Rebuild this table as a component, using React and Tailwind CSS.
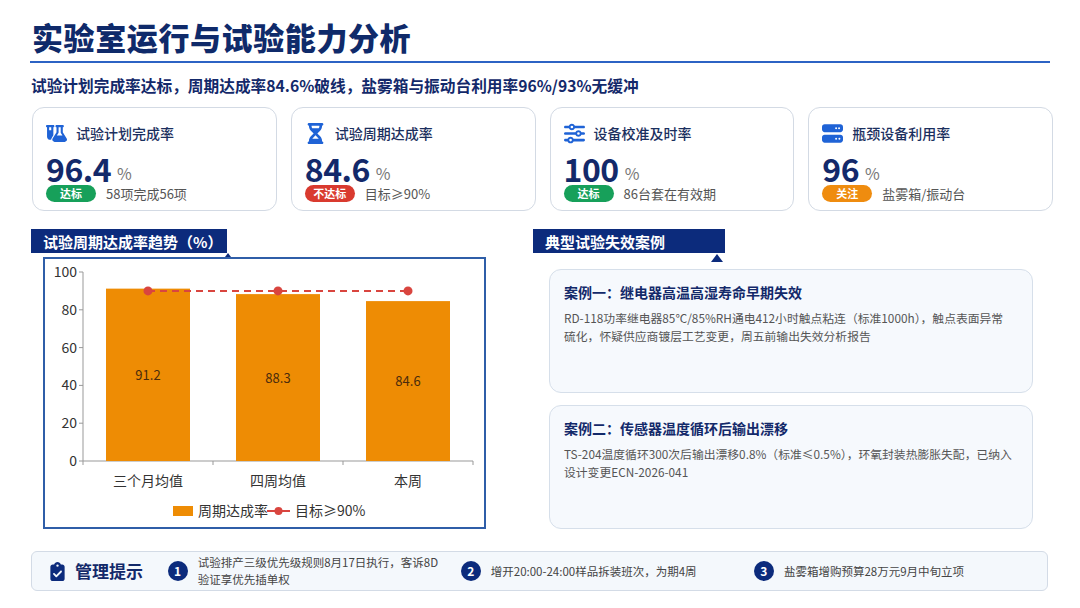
import { FaFlaskVial, FaHourglassHalf, FaSliders, FaServer, FaClipboardCheck } from 'react-icons/fa6';

const FONT = { fontFamily: '"Noto Sans CJK SC", "Noto Sans", sans-serif' };

const kpis = [
  { icon: FaFlaskVial, title: '试验计划完成率', value: '96.4', badge: '达标', tone: 'bg-[#17a05a]', note: '58项完成56项' },
  { icon: FaHourglassHalf, title: '试验周期达成率', value: '84.6', badge: '不达标', tone: 'bg-[#d93a2f]', note: '目标≥90%' },
  { icon: FaSliders, title: '设备校准及时率', value: '100', badge: '达标', tone: 'bg-[#17a05a]', note: '86台套在有效期' },
  { icon: FaServer, title: '瓶颈设备利用率', value: '96', badge: '关注', tone: 'bg-[#ef8c0f]', note: '盐雾箱/振动台' },
];

const bars = [
  { label: '三个月均值', value: 91.2 },
  { label: '四周均值', value: 88.3 },
  { label: '本周', value: 84.6 },
];

// lines broken where the slide breaks them
const cases = [
  {
    title: '案例一：继电器高温高湿寿命早期失效',
    lines: ['RD-118功率继电器85℃/85%RH通电412小时触点粘连（标准1000h），触点表面异常', '硫化，怀疑供应商镀层工艺变更，周五前输出失效分析报告'],
  },
  {
    title: '案例二：传感器温度循环后输出漂移',
    lines: ['TS-204温度循环300次后输出漂移0.8%（标准≤0.5%），环氧封装热膨胀失配，已纳入', '设计变更ECN-2026-041'],
  },
];

const tips = [
  '试验排产三级优先级规则8月17日执行，客诉8D验证享优先插单权',
  '增开20:00-24:00样品拆装班次，为期4周',
  '盐雾箱增购预算28万元9月中旬立项',
];

function KpiCard({ k }) {
  const Icon = k.icon;
  return (
    <div className="h-[104px] rounded-[12px] border border-[#d3dae4] bg-white pl-[13px] pt-[13px]">
      <div className="flex items-center gap-[9px] h-[24px]">
        <Icon className="text-[#1f63d6] text-[21px]" />
        <span className="text-[14px] text-[#1b2f5e] font-medium">{k.title}</span>
      </div>
      <div className="flex items-end mt-[8px] h-[28px]">
        <span className="text-[32px] leading-[26px] font-bold text-[#13296a] tracking-[-0.5px]">{k.value}</span>
        <span className="ml-[6px] text-[16px] leading-none text-[#777]">%</span>
      </div>
      <div className="flex items-center mt-[4px] gap-[10px]">
        <span className={`${k.tone} text-white text-[11px] leading-none font-bold rounded-full w-[50px] h-[17px] flex items-center justify-center`}>{k.badge}</span>
        <span className="text-[13px] leading-[17px] text-[#555]">{k.note}</span>
      </div>
    </div>
  );
}

function Chart() {
  const top = 13;
  const bottom = 202;
  const left = 38;
  const cw = 130;
  const sy = (v) => bottom - (v / 100) * (bottom - top);
  const targetY = sy(90);
  return (
    <svg width="439" height="268" className="block">
      {[0, 20, 40, 60, 80, 100].map((t) => (
        <g key={t}>
          <line x1={left - 4} x2={left} y1={sy(t)} y2={sy(t)} stroke="#999" />
          <text x={left - 6} y={sy(t) + 5} textAnchor="end" fontSize="14" fill="#333">{t}</text>
        </g>
      ))}
      <line x1={left} x2={left} y1={top} y2={bottom} stroke="#999" />
      <line x1={left} x2={left + cw * 3} y1={bottom} y2={bottom} stroke="#999" />
      {[0, 1, 2, 3].map((i) => (
        <line key={i} x1={left + cw * i} x2={left + cw * i} y1={bottom} y2={bottom + 4} stroke="#999" />
      ))}
      {bars.map((b, i) => {
        const cx = left + cw * i + cw / 2;
        const y = sy(b.value);
        return (
          <g key={b.label}>
            <rect x={cx - 42} y={y} width="84" height={bottom - y} fill="#ee8c04" />
            <text x={cx} y={(y + bottom) / 2 + 5} textAnchor="middle" fontSize="13" fill="#4a2b0c">{b.value}</text>
            <text x={cx} y="227" textAnchor="middle" fontSize="14" fill="#333">{b.label}</text>
          </g>
        );
      })}
      <line x1={left + cw / 2} x2={left + cw * 2.5} y1={targetY} y2={targetY} stroke="#d9453f" strokeWidth="2" strokeDasharray="7 5" />
      {[0, 1, 2].map((i) => (
        <circle key={i} cx={left + cw * i + cw / 2} cy={targetY} r="4.5" fill="#d9453f" />
      ))}
      <rect x="128" y="247" width="20" height="10" fill="#ee8c04" />
      <text x="153" y="257" fontSize="14" fill="#333">周期达成率</text>
      <line x1="222" x2="245" y1="252" y2="252" stroke="#d9453f" strokeWidth="2" />
      <circle cx="233.5" cy="252" r="4" fill="#d9453f" />
      <text x="250" y="257" fontSize="14" fill="#333">目标≥90%</text>
    </svg>
  );
}

export default function App() {
  return (
    <div className="w-[1080px] h-[608px] bg-white overflow-hidden" style={FONT}>
      <div className="ml-[30px] w-[1020px] pt-[17px]">
        <h1 className="text-[31px] leading-[40px] font-extrabold text-[#0f2a6a] ml-[2px] tracking-[0.6px]">实验室运行与试验能力分析</h1>
        <div className="mt-[4px] h-[2px] bg-[#2c63c4]" />
        <p className="mt-[13px] ml-[1px] text-[15.7px] leading-[20px] font-bold text-[#13296a]">试验计划完成率达标，周期达成率84.6%破线，盐雾箱与振动台利用率96%/93%无缓冲</p>
      </div>

      <div className="ml-[32px] w-[1021px] mt-[11px] grid grid-cols-4 gap-[14px]">
        {kpis.map((k) => <KpiCard key={k.title} k={k} />)}
      </div>

      <div className="flex mt-[18px] h-[300px]">
        <div className="ml-[31px] w-[455px] flex flex-col">
          <div className="relative w-[196px] h-[24px] bg-[#0c2b7c] flex items-center pl-[12px]">
            <span className="text-white text-[15px] font-bold leading-none">试验周期达成率趋势（%）</span>
            <span className="absolute right-[-4px] bottom-[-4px] w-0 h-0 border-x-[3px] border-x-transparent border-b-[4px] border-b-[#0c2b7c]" />
          </div>
          <div className="ml-[12px] mt-[4px] w-[443px] h-[272px] border-2 border-[#2f5ea8]">
            <Chart />
          </div>
        </div>

        <div className="ml-[47px] flex flex-col">
          <div className="relative w-[192px] h-[24px] bg-[#0c2b7c] flex items-center pl-[12px]">
            <span className="text-white text-[15px] font-bold leading-none">典型试验失效案例</span>
            <span className="absolute right-[2px] bottom-[-9px] w-0 h-0 border-x-[6px] border-x-transparent border-b-[8px] border-b-[#0c2b7c]" />
          </div>
          <div className="ml-[16px] mt-[16px] w-[484px] flex flex-col gap-[12px]">
            {cases.map((c) => (
              <div key={c.title} className="h-[124px] rounded-[12px] border border-[#d6dfea] bg-[#f6f9fd] px-[14px] pt-[12px]">
                <div className="text-[14px] leading-[20px] font-bold text-[#13296a]">{c.title}</div>
                <div className="mt-[7px] text-[11.8px] leading-[18px] text-[#555]">
                  {c.lines.map((l) => <span key={l} className="block whitespace-nowrap">{l}</span>)}
                </div>
              </div>
            ))}
          </div>
        </div>
      </div>

      <div className="ml-[31px] mt-[22px] w-[1017px] h-[40px] rounded-[6px] border border-[#d3dbe6] bg-[#f4f8fc] flex items-center">
        <div className="flex items-center w-[136px] pl-[16px] gap-[8px]">
          <FaClipboardCheck className="text-[#0c2b7c] text-[19px]" />
          <span className="text-[17px] font-bold text-[#13296a] whitespace-nowrap">管理提示</span>
        </div>
        {tips.map((t, i) => (
          <div key={i} className="flex items-center w-[294px] gap-[10px]">
            <span className="w-[20px] h-[20px] shrink-0 rounded-full bg-[#0c2b7c] text-white text-[12px] font-bold flex items-center justify-center">{i + 1}</span>
            <span className="text-[11.5px] leading-[17px] text-[#444] w-[250px]">{t}</span>
          </div>
        ))}
      </div>
    </div>
  );
}
